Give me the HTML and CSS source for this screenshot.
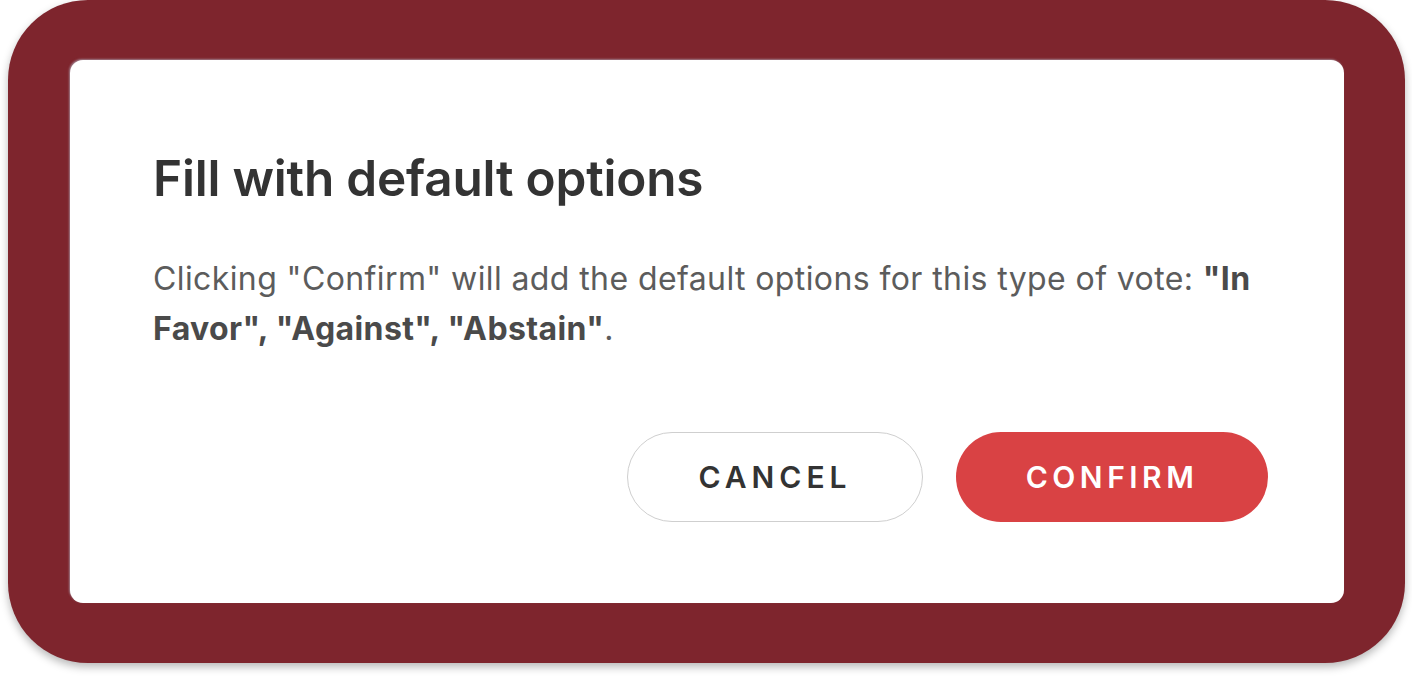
FILE: index.html
```html
<!DOCTYPE html>
<html lang="en">
<head>
<meta charset="utf-8">
<title>Fill with default options</title>
<link rel="stylesheet" href="styles.css">
</head>
<body>
<div class="frame">
  <div class="dialog">
    <h1 class="title">Fill with default options</h1>
    <p class="message">Clicking "Confirm" will add the default options for this type of vote: <strong>"In</strong> <strong>Favor", "Against", "Abstain"</strong>.</p>
    <div class="actions">
      <button class="btn btn-cancel">CANCEL</button>
      <button class="btn btn-confirm">CONFIRM</button>
    </div>
  </div>
</div>
</body>
</html>
```
FILE: styles.css
```css
html, body {
  margin: 0;
  padding: 0;
  background: #ffffff;
}
body {
  width: 1412px;
  height: 680px;
  overflow: hidden;
  font-family: "Inter", "Liberation Sans", sans-serif;
}
.frame {
  box-sizing: border-box;
  margin: 0 7px 0 8px;
  height: 663px;
  background: #7e252d;
  border-radius: 80px;
  padding: 60px 61px 60px 62px;
  box-shadow: 0 4px 8px rgba(0, 0, 0, 0.28);
  display: flex;
}
.dialog {
  flex: 1;
  background: #ffffff;
  border-radius: 13px;
  box-shadow: -1px -1px 2px rgba(180, 185, 200, 0.6);
  padding: 0 76px 0 83px;
  display: flex;
  flex-direction: column;
}
.title {
  margin: 88px 0 0;
  font-size: 49.5px;
  line-height: 60px;
  font-weight: 600;
  color: #333333;
  letter-spacing: -0.2px;
}
.message {
  margin: 46px 0 0;
  font-size: 32px;
  line-height: 50px;
  font-weight: 400;
  color: #5c5c5c;
  letter-spacing: 0.4px;
}
.message strong {
  font-weight: 700;
  color: #4a4a4a;
}
.actions {
  margin-top: 78px;
  display: flex;
  justify-content: flex-end;
  gap: 33px;
}
.btn {
  height: 90px;
  border-radius: 45px;
  font-family: "Inter", "Liberation Sans", sans-serif;
  font-size: 30px;
  font-weight: 600;
  letter-spacing: 5px;
  cursor: pointer;
}
.btn-cancel {
  width: 296px;
  background: #ffffff;
  border: 1.5px solid #cfcfcf;
  color: #333333;
}
.btn-confirm {
  width: 312px;
  background: #d94244;
  border: none;
  color: #ffffff;
  letter-spacing: 4.5px;
}
```
